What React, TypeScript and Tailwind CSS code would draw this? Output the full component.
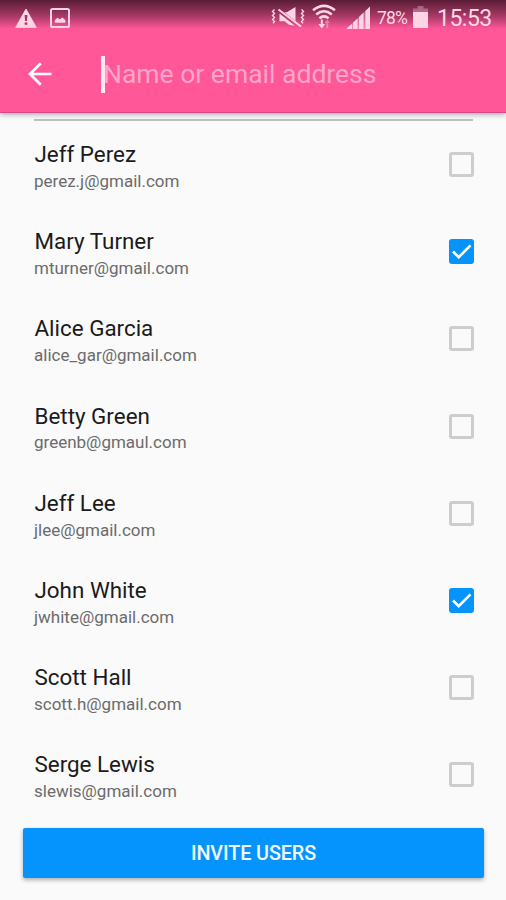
import { useState } from "react";
import clsx from "clsx";

interface User {
  name: string;
  email: string;
  invited: boolean;
}

const USERS: User[] = [
  { name: "Jeff Perez", email: "perez.j@gmail.com", invited: false },
  { name: "Mary Turner", email: "mturner@gmail.com", invited: true },
  { name: "Alice Garcia", email: "alice_gar@gmail.com", invited: false },
  { name: "Betty Green", email: "greenb@gmaul.com", invited: false },
  { name: "Jeff Lee", email: "jlee@gmail.com", invited: false },
  { name: "John White", email: "jwhite@gmail.com", invited: true },
  { name: "Scott Hall", email: "scott.h@gmail.com", invited: false },
  { name: "Serge Lewis", email: "slewis@gmail.com", invited: false },
];

function WarningIcon() {
  return (
    <svg className="h-[20px] w-[22px]" viewBox="0 0 22 20" fill="none">
      <path d="M11 1 21.3 19.4H.7z" fill="currentColor" stroke="currentColor" strokeWidth=".8" strokeLinejoin="round" />
      <path d="M9.6 7h2.8l-.5 6h-1.8zM9.7 14.4h2.6v2.4H9.7z" fill="#a8325f" />
    </svg>
  );
}

function PictureIcon() {
  return (
    <svg className="h-[20px] w-[20px]" viewBox="0 0 20 20" fill="none">
      <rect x="1" y="1" width="18" height="18" rx="1.6" stroke="currentColor" strokeWidth="2" />
      <path d="M4.800 14.800v-2.600L7.500 9.800l2.200 1.800L12.500 9.400l2.900 2.900v2.500z" fill="currentColor" />
    </svg>
  );
}

function MuteIcon() {
  return (
    <svg className="h-[22px] w-[34px]" viewBox="0 0 34 22" fill="none">
      <path d="M3.500 3.500 1.500 5.500l2 2-2 2 2 2-2 2 2 2-1.500 1.800M30.500 3.500l2 2-2 2 2 2-2 2 2 2-2 2 1.500 1.800" stroke="currentColor" strokeWidth="1.400" />
      <path d="M8.500 7.500 24 19.800l-6-1-4.500-3.500H8.500z" fill="currentColor" />
      <path d="M13.300 6.300h2.500l8.700-5.300v14.200z" fill="currentColor" />
      <path d="M7.500 3.500 30 20.500" stroke="currentColor" strokeWidth="1.900" />
    </svg>
  );
}

function WifiIcon() {
  return (
    <svg className="h-[26px] w-[24px]" viewBox="0 0 24 26" fill="none">
      <path d="M1 6.300Q12-2.500 23 6.300M4.200 10.400Q12 4.200 19.800 10.400M7.400 14.200Q12 10.600 16.600 14.200" stroke="currentColor" strokeWidth="2.500" />
      <path d="M9.800 15.500v6" stroke="currentColor" strokeWidth="2" />
      <path d="M6.300 20h7l-3.500 4.500z" fill="currentColor" />
      <path d="M14.200 24v-5h-1.700l2.700-3.500 2.800 3.500h-1.800v5z" fill="currentColor" opacity=".4" />
    </svg>
  );
}

function SignalIcon() {
  return (
    <svg className="h-[23px] w-[24px]" viewBox="0 0 24 23" fill="currentColor">
      <path d="M0 23v-1L5 17.700V23zM6 23v-6.300l4.500-4.200V23zM12 23V11L16.500 6.500V23zM18.300 23V5L23 .5V23z" />
      <path d="M5 17.700 18.300 5V23H5z" opacity=".35" />
    </svg>
  );
}

function BatteryIcon() {
  return (
    <svg className="h-[22px] w-[15px]" viewBox="0 0 15 22" fill="currentColor">
      <path d="M4.500 0h6v2.500H15V6H0V2.500h4.500z" opacity=".35" />
      <path d="M0 6h15v16H0z" />
    </svg>
  );
}

function StatusBar() {
  return (
    <div className="flex h-9 items-start bg-linear-to-b from-[#5a1c36] via-[#a83a67] via-45% to-[#ff5798] to-80% text-[#ffd5e6]">
      <div className="flex gap-[13px] pt-2 pl-[15px]">
        <WarningIcon />
        <PictureIcon />
      </div>
      <div className="ml-auto flex items-start pr-[13px]">
        <div className="pt-[6px]"><MuteIcon /></div>
        <div className="ml-[7px] pt-[4px]"><WifiIcon /></div>
        <div className="ml-[11px] pt-[6px]"><SignalIcon /></div>
        <span className="ml-[6px] w-[32px] pt-[8px] text-[17.5px] leading-5 tracking-[-0.8px] whitespace-nowrap">78%</span>
        <div className="ml-[4px] pt-[6px]"><BatteryIcon /></div>
        <span className="ml-[9px] w-[56px] pt-[7px] text-[23px] leading-6 tracking-[-0.5px] whitespace-nowrap">15:53</span>
      </div>
    </div>
  );
}

function Checkbox({ checked }: { checked: boolean }) {
  return (
    <span className={clsx(
      "flex h-[25px] w-[25px] items-center justify-center rounded-[3px]",
      checked ? "bg-[#0593fd]" : "border-3 border-[#cdcdcd]"
    )}>
      {checked && (
        <svg className="h-[25px] w-[25px]" viewBox="0 0 25 25" fill="none">
          <path d="m4 12.500 5.700 5.700L21.500 6.400" stroke="#fff" strokeWidth="2.700" />
        </svg>
      )}
    </span>
  );
}

export default function App() {
  const [users, setUsers] = useState(USERS);

  const toggle = (email: string) =>
    setUsers((prev) => prev.map((u) => (u.email === email ? { ...u, invited: !u.invited } : u)));

  return (
    <div className="flex h-[900px] w-[506px] flex-col overflow-hidden bg-[#fafafa] font-[Roboto,sans-serif]">
      <header className="h-[113px] shrink-0 border-b border-[#e04683] bg-[#ff5798] shadow-[0_2px_5px_rgba(0,0,0,0.28)]">
        <StatusBar />
        <div className="flex h-[76px] items-center">
          <button aria-label="Back" className="ml-[28px]">
            <svg className="h-[24px] w-[24px]" viewBox="0 0 24 24" fill="none">
              <path d="M23.500 12H2.500M12.800 1.300 2 12l10.800 10.700" stroke="#fff" strokeWidth="2.700" />
            </svg>
          </button>
          <span className="ml-[49px] h-[37px] w-[3.5px] bg-[#ffeaf3]" />
          <span className="-ml-[1.5px] text-[26.5px] leading-8 whitespace-nowrap text-[#ffa6c9]">Name or email address</span>
        </div>
      </header>

      <div className="mr-[33px] ml-[34px] mt-[6px] h-[2px] shrink-0 bg-[#bdc0bf]" />

      <ul className="pr-[32px] pl-[34px]">
        {users.map((user) => (
          <li key={user.email} onClick={() => toggle(user.email)} className="flex h-[87.2px] cursor-pointer items-center justify-between">
            <div className="pt-[4.6px]">
              <div className="mb-[0.9px] pl-[0.5px] text-[22.4px] leading-[28px] text-[#1b1b1b]">{user.name}</div>
              <div className="text-[17px] leading-[25px] text-[#6b6b6b]">{user.email}</div>
            </div>
            <Checkbox checked={user.invited} />
          </li>
        ))}
      </ul>

      <button className="mr-[22px] ml-[23px] mt-[9px] h-[50px] shrink-0 rounded-[2px] bg-[#0593fd] pt-[2px] text-[19.8px] font-medium tracking-[-0.1px] text-[#f2f9ff] shadow-[0_2px_4px_rgba(0,0,0,0.32)]">
        INVITE USERS
      </button>
    </div>
  );
}
